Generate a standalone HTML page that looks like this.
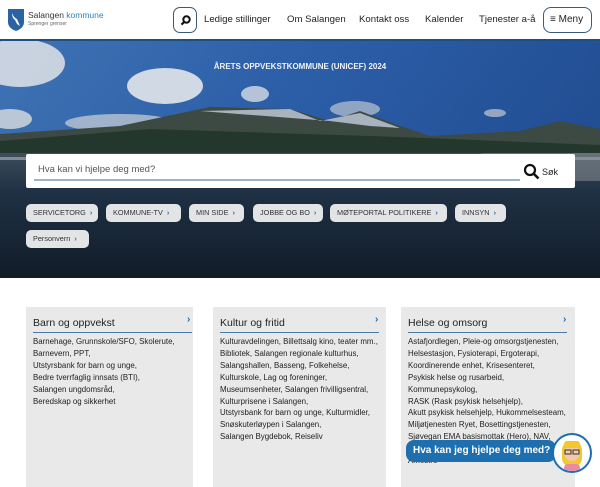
<!DOCTYPE html>
<html><head><meta charset="utf-8"><style>
*{margin:0;padding:0;box-sizing:border-box}
body{width:600px;height:480px;overflow:hidden;background:#fff;font-family:"Liberation Sans",sans-serif;color:#222;position:relative}
.hdr{position:absolute;left:0;top:0;width:600px;height:41px;background:#fff;border-bottom:2px solid #1d4f80}
.nav{position:absolute;top:14px;font-size:9.6px;color:#222;white-space:nowrap}
.btn{position:absolute;border:1.5px solid #3c5a78;border-radius:7px;background:#fff}
.hero{position:absolute;left:0;top:41px;width:600px;height:237px;overflow:hidden}
.search{position:absolute;left:26px;top:154px;width:549px;height:34px;background:#fff;border-radius:2px}
.chip{position:absolute;height:18px;background:#e3e4e6;border-radius:5px;font-size:7.3px;color:#333;line-height:18px;padding-left:7px;white-space:nowrap;overflow:hidden}
.chip b{color:#2a6aa8;font-weight:bold;margin-left:4px}
.card{position:absolute;top:307px;height:180px;background:#e9e9e9}
.card h3{position:absolute;left:7px;top:10px;font-weight:normal;font-size:10.5px;color:#222;width:159px;border-bottom:1.5px solid #4c7ba8;padding-bottom:3px}
.card .ar{position:absolute;top:7px;font-size:10px;color:#2a6aa8;font-weight:bold}
.card p{position:absolute;left:7px;top:29px;font-size:7.9px;line-height:11.9px;color:#222;width:172px;white-space:nowrap}
</style></head><body>
<div class="hdr">
<svg style="position:absolute;left:8px;top:9px" width="16" height="22" viewBox="0 0 16 22"><path d="M0 0H16V13Q16 19 8 22Q0 19 0 13Z" fill="#2a62a3"/><path d="M4 4Q6 9 9 10L12 17L9 15L7 11Q4 9 4 4Z" fill="#fff"/></svg>
<div style="position:absolute;left:28px;top:10px;font-size:8.5px;color:#333">Salangen <span style="color:#2a84c0">kommune</span></div>
<div style="position:absolute;left:28px;top:21px;font-size:5px;color:#666">Sprenger grenser</div>
<div class="btn" style="left:173px;top:7px;width:24px;height:26px"><svg style="position:absolute;left:6px;top:7px" width="11" height="11" viewBox="0 0 11 11"><circle cx="6.5" cy="4.5" r="3.2" fill="none" stroke="#111" stroke-width="2"/><path d="M4.3 6.8L1.5 9.6" stroke="#111" stroke-width="2.2"/></svg></div>
<div class="nav" style="left:204px">Ledige stillinger</div>
<div class="nav" style="left:287px">Om Salangen</div>
<div class="nav" style="left:359px">Kontakt oss</div>
<div class="nav" style="left:425px">Kalender</div>
<div class="nav" style="left:479px">Tjenester a-å</div>
<div class="btn" style="left:543px;top:7px;width:49px;height:26px;border-radius:8px"><span style="position:absolute;left:6px;top:6px;font-size:10px;white-space:nowrap">≡ Meny</span></div>
</div>
<div class="hero">
<svg width="600" height="237" viewBox="0 0 600 237" preserveAspectRatio="none">
<defs><linearGradient id="sky" x1="0" y1="0" x2="1" y2="0.3"><stop offset="0" stop-color="#3f73b3"/><stop offset="0.5" stop-color="#2c5ea8"/><stop offset="1" stop-color="#224e93"/></linearGradient>
<linearGradient id="wat" x1="0" y1="0" x2="0" y2="1"><stop offset="0" stop-color="#3e4e5c"/><stop offset="0.3" stop-color="#1f3144"/><stop offset="1" stop-color="#121c28"/></linearGradient></defs>
<rect width="600" height="237" fill="url(#sky)"/>
<ellipse cx="20" cy="22" rx="45" ry="24" fill="#d8dde4" opacity=".9"/>
<ellipse cx="165" cy="45" rx="38" ry="18" fill="#e2e6ea" opacity=".9"/>
<ellipse cx="120" cy="82" rx="55" ry="9" fill="#bcc6d2" opacity=".8"/>
<ellipse cx="10" cy="78" rx="22" ry="10" fill="#c8d0da" opacity=".9"/>
<ellipse cx="255" cy="53" rx="14" ry="8" fill="#d6dce3" opacity=".8"/>
<ellipse cx="355" cy="68" rx="25" ry="8" fill="#aab8ca" opacity=".8"/>
<ellipse cx="495" cy="72" rx="11" ry="4" fill="#b0bccc" opacity=".8"/>
<path d="M0 93L120 85L210 66L290 68L330 80L360 70L400 85L430 95L520 90L560 80L600 88V122H0Z" fill="#3d4a44"/>
<path d="M200 70L290 68L320 80L360 72L400 87L370 85L330 80Z" fill="#a9b3bd"/>
<path d="M0 100L150 88L400 96L600 104V122H0Z" fill="#24372c"/>
<rect y="112" width="600" height="125" fill="url(#wat)"/>
<rect x="0" y="116" width="600" height="3" fill="#7f8a92"/>
<path d="M480 112H600V140H560Z" fill="#8e9398" opacity=".5"/>
</svg>
<div style="position:absolute;left:0;width:600px;top:21px;text-align:center;font-size:8px;font-weight:bold;color:#eef2f8">ÅRETS OPPVEKSTKOMMUNE (UNICEF) 2024</div>
</div>
<div class="search">
<div style="position:absolute;left:12px;top:10px;font-size:9.5px;color:#555">Hva kan vi hjelpe deg med?</div>
<div style="position:absolute;left:8px;top:25px;width:486px;height:1.5px;background:#9ab3c6"></div>
<svg style="position:absolute;left:497px;top:9px" width="17" height="17" viewBox="0 0 17 17"><circle cx="7" cy="7" r="5" fill="none" stroke="#111" stroke-width="2.2"/><path d="M10.5 10.5L15.5 15.5" stroke="#111" stroke-width="2.6"/></svg>
<div style="position:absolute;left:516px;top:13px;font-size:9px;color:#222">Søk</div>
</div>
<div class="chip" style="left:26px;top:204px;width:72px">SERVICETORG<b>›</b></div>
<div class="chip" style="left:106px;top:204px;width:75px">KOMMUNE-TV<b>›</b></div>
<div class="chip" style="left:189px;top:204px;width:55px">MIN SIDE<b>›</b></div>
<div class="chip" style="left:253px;top:204px;width:70px">JOBBE OG BO<b>›</b></div>
<div class="chip" style="left:330px;top:204px;width:117px">MØTEPORTAL POLITIKERE<b>›</b></div>
<div class="chip" style="left:455px;top:204px;width:51px">INNSYN<b>›</b></div>
<div class="chip" style="left:26px;top:230px;width:63px">Personvern<b>›</b></div>
<div class="card" style="left:26px;width:167px"><h3>Barn og oppvekst</h3><span class="ar" style="left:161px">›</span><p>Barnehage, Grunnskole/SFO, Skolerute,<br>Barnevern, PPT,<br>Utstyrsbank for barn og unge,<br>Bedre tverrfaglig innsats (BTI),<br>Salangen ungdomsråd,<br>Beredskap og sikkerhet</p></div>
<div class="card" style="left:213px;width:173px"><h3>Kultur og fritid</h3><span class="ar" style="left:162px">›</span><p>Kulturavdelingen, Billettsalg kino, teater mm.,<br>Bibliotek, Salangen regionale kulturhus,<br>Salangshallen, Basseng, Folkehelse,<br>Kulturskole, Lag og foreninger,<br>Museumsenheter, Salangen frivilligsentral,<br>Kulturprisene i Salangen,<br>Utstyrsbank for barn og unge, Kulturmidler,<br>Snøskuterløypen i Salangen,<br>Salangen Bygdebok, Reiseliv</p></div>
<div class="card" style="left:401px;width:174px;overflow:hidden"><h3>Helse og omsorg</h3><span class="ar" style="left:162px">›</span><p>Astafjordlegen, Pleie-og omsorgstjenesten,<br>Helsestasjon, Fysioterapi, Ergoterapi,<br>Koordinerende enhet, Krisesenteret,<br>Psykisk helse og rusarbeid,<br>Kommunepsykolog,<br>RASK (Rask psykisk helsehjelp),<br>Akutt psykisk helsehjelp, Hukommelsesteam,<br>Miljøtjenesten Ryet, Bosettingstjenesten,<br>Sjøvegan EMA basismottak (Hero), NAV,<br>Tilbakemelding, Pasient- og brukerombud,<br>Amestro</p></div>
<div style="position:absolute;left:406px;top:440px;width:150px;height:22px;background:#1d6fb0;border-radius:8px;color:#fff;font-weight:bold;font-size:10px;line-height:22px;padding-left:7px;white-space:nowrap">Hva kan jeg hjelpe deg med?</div>
<div style="position:absolute;left:552px;top:433px;width:40px;height:40px;border-radius:50%;background:#fff;border:2.5px solid #1d6fb0;overflow:hidden">
<svg width="36" height="36" viewBox="0 0 36 36"><rect x="8" y="6" width="20" height="26" rx="9" fill="#f1c82e"/><circle cx="18" cy="18" r="8" fill="#f4c9a8"/><rect x="10" y="6" width="16" height="7" rx="3" fill="#f1c82e"/><rect x="11" y="15" width="6" height="4" fill="none" stroke="#333" stroke-width="1"/><rect x="19" y="15" width="6" height="4" fill="none" stroke="#333" stroke-width="1"/><rect x="10" y="29" width="16" height="8" rx="4" fill="#e88aa0"/></svg></div>
</body></html>
